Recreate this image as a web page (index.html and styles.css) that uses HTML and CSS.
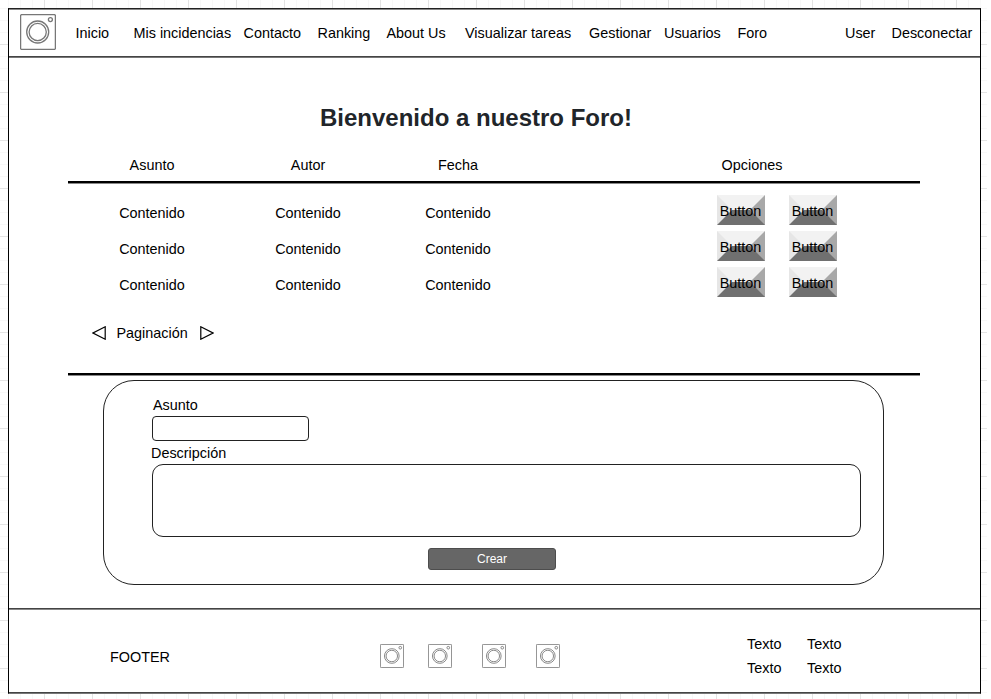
FILE: index.html
```html
<!DOCTYPE html>
<html lang="es">
<head>
<meta charset="utf-8">
<title>Foro</title>
<link rel="stylesheet" href="styles.css">
</head>
<body>
<svg class="defs" width="0" height="0">
  <symbol id="camera" viewBox="0 0 36 36">
    <rect x=".6" y=".6" width="34.8" height="34.8" rx="1.2"/>
    <circle cx="17.7" cy="18" r="11"/>
    <circle cx="17.7" cy="18" r="8.6"/>
    <circle cx="30.4" cy="5.6" r="2"/>
  </symbol>
</svg>
<div class="frame">
  <header class="header">
    <svg class="logo"><use href="#camera"/></svg>
    <nav class="nav">
      <a>Inicio</a><a>Mis incidencias</a><a>Contacto</a><a>Ranking</a><a>About Us</a><a>Visualizar tareas</a><a>Gestionar</a><a>Usuarios</a><a>Foro</a><a>User</a><a>Desconectar</a>
    </nav>
  </header>
  <main class="main">
    <h1>Bienvenido a nuestro Foro!</h1>
    <section class="table">
      <div class="row head"><span>Asunto</span><span>Autor</span><span>Fecha</span><span class="title">Opciones</span></div>
      <div class="body">
        <div class="row"><span>Contenido</span><span>Contenido</span><span>Contenido</span><div class="options"><button><b>Button</b></button><button><b>Button</b></button></div></div>
        <div class="row"><span>Contenido</span><span>Contenido</span><span>Contenido</span><div class="options"><button><b>Button</b></button><button><b>Button</b></button></div></div>
        <div class="row"><span>Contenido</span><span>Contenido</span><span>Contenido</span><div class="options"><button><b>Button</b></button><button><b>Button</b></button></div></div>
        <div class="pager">
          <svg width="14" height="14" viewBox="0 0 14 14"><path d="M13.2 .8V13.2L1 7Z"/></svg>
          <span>Paginación</span>
          <svg width="14" height="14" viewBox="0 0 14 14"><path d="M.8 .8V13.2L13 7Z"/></svg>
        </div>
      </div>
    </section>
    <form class="form">
      <label class="subject">Asunto</label>
      <div class="field"></div>
      <label>Descripción</label>
      <div class="field area"></div>
      <div class="create">Crear</div>
    </form>
  </main>
  <footer class="footer">
    <span class="name">FOOTER</span>
    <div class="social">
      <svg><use href="#camera"/></svg><svg><use href="#camera"/></svg><svg><use href="#camera"/></svg><svg><use href="#camera"/></svg>
    </div>
    <div class="links"><span>Texto</span><span>Texto</span><span>Texto</span><span>Texto</span></div>
  </footer>
</div>
</body>
</html>
```
FILE: styles.css
```css
* { box-sizing: border-box; }
html { background: #fff; }
body {
  margin: 0;
  width: 987px;
  height: 699px;
  overflow: hidden;
  padding: 8px 6px 5px 8px;
  font: 14.4px/18px "Liberation Sans", Arial, sans-serif;
  color: #000;
  background:
    repeating-linear-gradient(90deg, #e4e4e4 0 1px, transparent 1px 48px) -4px 0,
    repeating-linear-gradient(#e4e4e4 0 1px, transparent 1px 48px) 0 -4px,
    repeating-linear-gradient(90deg, #f8f8f8 0 1px, transparent 1px 12px) -4px 0,
    repeating-linear-gradient(#f8f8f8 0 1px, transparent 1px 12px) 0 -4px;
  background-size: 1056px 720px;
}
.defs { position: absolute; }
.frame {
  width: 973px;
  height: 686px;
  display: flex;
  flex-direction: column;
  background: #fff;
  border: 1px solid #000;
  border-top-color: #222;
  border-bottom-color: #777;
}
.header {
  height: 49px;
  flex: none;
  display: flex;
  align-items: center;
  border-bottom: 1px solid #777;
  box-shadow: inset 0 1px #888, inset 0 -1px #444;
}
.logo { flex: none; width: 36px; height: 36px; margin: -2px 19.5px 0 11px; }
.logo, .social svg { fill: none; stroke: #777; stroke-width: 1.3; }
.nav {
  display: grid;
  grid-template-columns: 58px 110px 74px 69px 78.5px 124px 75px 73.5px 107.5px 46.5px 82px;
  white-space: nowrap;
}
.main { height: 550px; flex: none; padding: 44px 59px 0; }
h1 {
  margin: 0;
  width: 816px;
  text-align: center;
  font-size: 24px;
  line-height: 32px;
  color: #212529;
}
.table { width: 852px; border-bottom: 2px solid #000; box-shadow: 0 1px #888; }
.row {
  display: grid;
  grid-template-columns: 168px 144px 156px 180.5px 203.5px;
  height: 36px;
  align-items: center;
  text-align: center;
}
.head {
  grid-template-columns: 168px 144px 156px 432px;
  height: 49px;
  padding-top: 14px;
  border-bottom: 2px solid #000;
  box-shadow: 0 1px #888;
}
.head .title { width: 432px; }
.body { height: 190px; padding-top: 12px; }
.options { grid-column: 5; display: flex; gap: 24px; margin-top: -6px; }
button {
  display: flex;
  justify-content: center;
  align-items: center;
  width: 48px;
  height: 30px;
  padding: 0;
  font: inherit;
  color: #000;
  background: none;
  border: 15px solid;
  border-color: #f2f2f2 #a8a8a8 #707070 #e6e6e6;
}
button b { font-weight: 400; padding-top: 2px; }
.pager { display: flex; align-items: center; height: 36px; margin: 12px 0 0 23.5px; gap: 11.5px; }
.pager span { margin: 0 .5px 0 -.5px; }
.pager svg { fill: #fff; stroke: #000; stroke-width: 1.2; }
.form {
  width: 781px;
  height: 205px;
  margin: 5px 0 0 35px;
  padding: 15px 21px 0 48px;
  border: 1.2px solid #222;
  border-radius: 31px;
}
label { display: block; height: 20px; margin-left: -1px; }
.subject { margin-left: 1px; }
.field { width: 157px; height: 25px; border: 1px solid #222; border-radius: 4px; margin-bottom: 3px; }
.area { width: 709px; height: 73px; border-radius: 11px; margin: 0 0 11px; }
.create {
  width: 128px;
  height: 22px;
  margin-left: 276px;
  border: 1px solid #4d4d4d;
  border-radius: 3px;
  background: #666;
  color: #fff;
  text-align: center;
  font-size: 12px;
  line-height: 20px;
}
.footer {
  flex: 1;
  display: flex;
  border-top: 1px solid #444;
  box-shadow: inset 0 1px #888, inset 0 -1px #444;
}
.name { width: 270px; padding: 39px 0 0 101px; }
.social { display: flex; width: 367px; padding: 35px 0 0 101px; gap: 30px; }
.social svg { width: 24px; height: 24px; }
.social svg:first-child { margin-right: -6px; }
.links { display: grid; grid-template-columns: 60px 60px; grid-auto-rows: 24px; padding: 26px 0 0 101px; }
```
